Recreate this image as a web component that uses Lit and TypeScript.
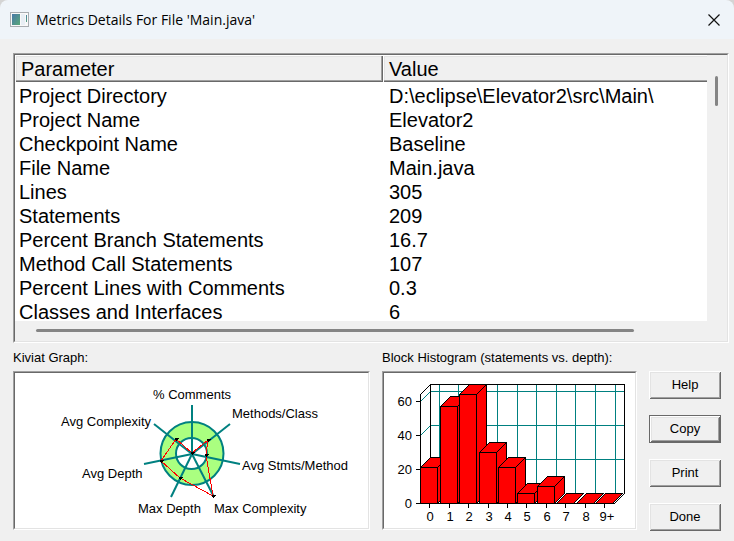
import { LitElement, html, css, svg } from "lit";
import { customElement } from "lit/decorators.js";

const ROWS: [string, string][] = [
  ["Project Directory", "D:\\eclipse\\Elevator2\\src\\Main\\"],
  ["Project Name", "Elevator2"],
  ["Checkpoint Name", "Baseline"],
  ["File Name", "Main.java"],
  ["Lines", "305"],
  ["Statements", "209"],
  ["Percent Branch Statements", "16.7"],
  ["Method Call Statements", "107"],
  ["Percent Lines with Comments", "0.3"],
  ["Classes and Interfaces", "6"],
];

@customElement("kiviat-graph")
class KiviatGraph extends LitElement {
  static styles = css`
    :host { display: block; }
    svg { display: block; width: 100%; height: 155px; font: 13px "Liberation Sans", Arial, sans-serif; }
    .spoke { stroke: #008080; stroke-width: 2; fill: none; }
    .zone { fill: #aaff80; stroke: #008080; stroke-width: 2; }
    .core { fill: #fff; stroke: #008080; stroke-width: 2; }
    .plot { fill: none; stroke: #f00; stroke-width: 1; shape-rendering: crispEdges; }
  `;
  render() {
    const ends = [[192, 405], [230, 424], [240, 464], [214, 497], [171, 497], [144, 464], [154, 424]];
    const points = [[192, 453], [208, 440], [206, 455], [213, 496], [180, 478], [161, 461], [176, 439]];
    const labels: [string, number, number][] = [
      ["% Comments", 153, 399],
      ["Methods/Class", 232, 418],
      ["Avg Stmts/Method", 242, 470],
      ["Max Complexity", 214, 513],
      ["Max Depth", 138, 513],
      ["Avg Depth", 82, 478],
      ["Avg Complexity", 61, 426],
    ];
    return html`<svg viewBox="15 373 353 155" preserveAspectRatio="xMinYMin meet" role="img" aria-label="Kiviat Graph">
      <circle class="zone" cx="192" cy="453.5" r="31.5" />
      <circle class="core" cx="191.5" cy="453.5" r="15.5" />
      ${ends.map(([x, y]) => svg`<line class="spoke" x1="192" y1="454" x2=${x} y2=${y} />`)}
      <polygon class="plot" points=${points.map((p) => p.join(",")).join(" ")} />
      ${points.map(([x, y]) => svg`<path d="M${x - 1} ${y - 1}h4v1h-1v1h-1v1h-1v-1h-1z" />`)}
      ${labels.map(([t, x, y]) => svg`<text x=${x} y=${y}>${t}</text>`)}
    </svg>`;
  }
}

@customElement("block-histogram")
class BlockHistogram extends LitElement {
  static styles = css`
    :host { display: block; }
    svg { display: block; width: 100%; height: 155px; font: 13px "Liberation Sans", Arial, sans-serif; }
    .grid { stroke: #008080; fill: none; shape-rendering: crispEdges; }
    .axis { stroke: #000; fill: none; shape-rendering: crispEdges; }
    .face { fill: #f00; stroke: #000; shape-rendering: crispEdges; }
    .mid { text-anchor: middle; }
    .end { text-anchor: end; }
  `;
  render() {
    const counts = [21, 57, 64, 30, 21, 6, 10, 0, 0, 0];
    const left = [420, 440, 459, 479, 498, 517, 537, 556, 576, 595];
    const base = 503;
    const yOf = (n: number) => Math.round(base - n * 1.7);
    return html`<svg viewBox="384 373 251 155" preserveAspectRatio="xMinYMin meet" role="img" aria-label="Block Histogram">
      ${[439, 458, 478, 497, 517, 536, 556, 575, 595, 615].map(
        (x) => svg`<path class="grid" d="M${x + 0.5} 384.5V493.5" />`,
      )}
      ${[20, 40, 60].map((n) => svg`<path class="grid" d="M420.5 ${yOf(n) + 0.5}l10 -10H624.5" />`)}
      <path class="axis" d="M420.5 503.5V394.5l10 -10H624.5V493.5l-10 10M430.5 384.5V493.5l-10 10" />
      <path class="axis" d="M416.5 503.5H615" />
      ${counts.map((n, i) => {
        const x = left[i] + 0.5;
        const y = yOf(n) + 0.5;
        return svg`<path class="face" d="M${x} ${y}l10 -10h17l-10 10z" />
          ${n
            ? svg`<path class="face" d="M${x + 17} ${y}l10 -10V493.5l-10 10z" />
              <path class="face" d="M${x} ${y}h17V503.5h-17z" />`
            : null}`;
      })}
      ${[0, 20, 40, 60].map(
        (n) => svg`<path class="axis" d="M416 ${yOf(n) + 0.5}h5" />
          <text class="end" x="412" y=${yOf(n) + 5}>${n}</text>`,
      )}
      ${counts.map((_, i) => {
        const x = left[i] + 9;
        return svg`<path class="axis" d="M${x + 0.5} 503v5" />
          <text class="mid" x=${i === 9 ? x + 3 : x + 1} y="521">${i === 9 ? "9+" : i}</text>`;
      })}
    </svg>`;
  }
}

@customElement("app-root")
class AppRoot extends LitElement {
  static styles = css`
    * { box-sizing: border-box; }
    :host {
      display: flex;
      flex-direction: column;
      min-height: 100vh;
      background: #d4d4d4;
      color: #000;
      font: 13px/16px "Liberation Sans", Arial, sans-serif;
    }
    .title {
      display: flex;
      align-items: center;
      gap: 7px;
      height: 39px;
      padding: 0 14px 0 10px;
      background: #eff4f9;
      border-radius: 8px 8px 0 0;
    }
    main { flex: 1; display: flow-root; background: #f0f0f0; }
    h1 { flex: 1; margin: 0; font: 14px/20px "Open Sans", "Noto Sans", sans-serif; }
    .app { width: 19px; height: 16px; }
    .close { display: flex; padding: 0; border: 0; background: none; }
    .sunken {
      border: 1px solid;
      border-color: #a0a0a0 #fff #fff #a0a0a0;
      background: #fff;
    }
    .inner {
      border: 1px solid;
      border-color: #696969 #e3e3e3 #e3e3e3 #696969;
    }
    .list { margin: 14px 5px 0 13px; }
    .view { display: grid; grid-template-columns: 1fr 20px; background: #f0f0f0; }
    table { width: 100%; border-collapse: collapse; table-layout: fixed; background: #fff; font-size: 20px; line-height: 24px; }
    .name { width: 368px; }
    th {
      height: 27px;
      padding: 0 6px;
      background: #f0f0f0;
      font-weight: normal;
      text-align: left;
      box-shadow: inset 1px 1px #fff, inset -1px -1px #696969, inset -2px -2px #a0a0a0, inset 2px 2px #e3e3e3;
    }
    th:last-child { box-shadow: inset 1px 1px #fff, inset 0 -1px #696969, inset 0 -2px #a0a0a0, inset 2px 2px #e3e3e3; }
    td { height: 24px; padding: 0 4px; white-space: nowrap; }
    td:last-child { padding-left: 6px; }
    tbody tr:first-child td { height: 26px; padding-top: 2px; }
    tbody tr:last-child td { height: 21px; padding-top: 3px; line-height: 18px; }
    .vbar { padding: 21px 8px 0; }
    .hbar { padding: 8px 73px 9px 21px; }
    .thumb { border-radius: 2px; background: #858585; }
    .vbar .thumb { height: 30px; width: 3px; }
    .hbar .thumb { height: 3px; }
    .lower {
      display: grid;
      grid-template-columns: 357fr 255fr 72px;
      column-gap: 12px;
      padding: 6px 13px 10px;
    }
    h2 { margin: 0 0 5px; font-size: 13px; font-weight: normal; line-height: 17px; }
    .buttons { display: flex; flex-direction: column; gap: 16px; padding-top: 22px; }
    .push {
      height: 28px;
      padding: 0 0 2px;
      border: 0;
      background: #f0f0f0;
      color: #000;
      font: 13px "Liberation Sans", Arial, sans-serif;
      box-shadow: inset 1px 1px #fff, inset -1px -1px #696969, inset 2px 2px #e3e3e3, inset -2px -2px #a0a0a0;
    }
    .default {
      border: 1px solid #696969;
    }
  `;

  render() {
    return html`
      <header class="title">
        <svg class="app" viewBox="0 0 19 16" aria-hidden="true">
          <defs>
            <linearGradient id="g" x2="1" y2="1">
              <stop offset="0" stop-color="#4878a8" /><stop offset="1" stop-color="#58a878" />
            </linearGradient>
          </defs>
          <rect x="0.5" y="0.5" width="18" height="14" fill="#f8f8f8" stroke="#a8acb0" />
          <rect x="2" y="2" width="8" height="11" fill="url(#g)" />
          <rect x="11" y="2" width="4" height="11" fill="#e8eef4" />
          <rect x="16" y="3" width="1" height="7" fill="url(#g)" />
        </svg>
        <h1>Metrics Details For File 'Main.java'</h1>
        <button class="close" aria-label="Close">
          <svg width="12" height="12" viewBox="0 0 12 12"><path d="M.5 .5l11 11M11.5 .5l-11 11" stroke="#111" stroke-width="1.2" /></svg>
        </button>
      </header>
      <main>
        <section class="sunken list"><div class="inner">
          <div class="view">
            <table>
              <colgroup><col class="name" /><col /></colgroup>
              <thead><tr><th scope="col">Parameter</th><th scope="col">Value</th></tr></thead>
              <tbody>${ROWS.map(([k, v]) => html`<tr><td>${k}</td><td>${v}</td></tr>`)}</tbody>
            </table>
            <div class="vbar"><div class="thumb"></div></div>
            <div class="hbar"><div class="thumb"></div></div>
          </div>
        </div></section>
        <div class="lower">
          <section>
            <h2>Kiviat Graph:</h2>
            <div class="sunken"><div class="inner"><kiviat-graph></kiviat-graph></div></div>
          </section>
          <section>
            <h2>Block Histogram (statements vs. depth):</h2>
            <div class="sunken"><div class="inner"><block-histogram></block-histogram></div></div>
          </section>
          <nav class="buttons">
            <button class="push">Help</button>
            <button class="push default">Copy</button>
            <button class="push">Print</button>
            <button class="push">Done</button>
          </nav>
        </div>
      </main>
    `;
  }
}
